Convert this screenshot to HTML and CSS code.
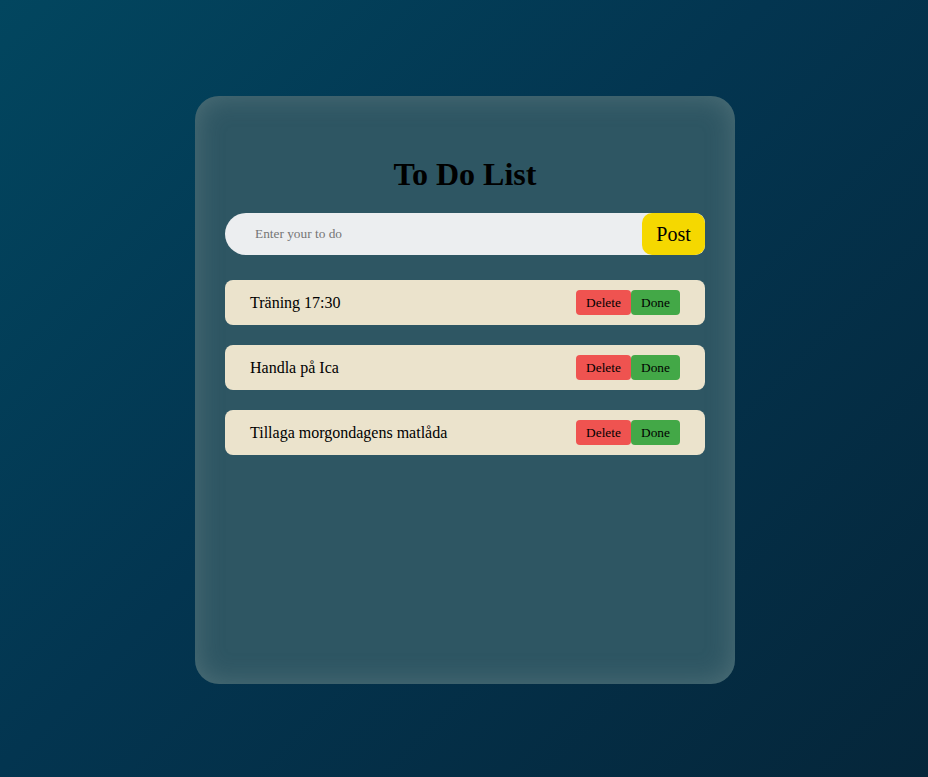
FILE: index.html
```html
<!DOCTYPE html>
<html>
<head>
<meta charset="utf-8">
<link rel="stylesheet" href="styles.css">
</head>
<body>
<div class="card">
  <h1 class="title">To Do List</h1>
  <div class="entry">
    <input class="entry-input" type="text" placeholder="Enter your to do">
    <button class="post-btn">Post</button>
  </div>
  <ul class="list">
    <li class="item"><span class="item-text">Träning 17:30</span><span class="actions"><button class="btn btn-delete">Delete</button><button class="btn btn-done">Done</button></span></li>
    <li class="item"><span class="item-text">Handla på Ica</span><span class="actions"><button class="btn btn-delete">Delete</button><button class="btn btn-done">Done</button></span></li>
    <li class="item"><span class="item-text">Tillaga morgondagens matlåda</span><span class="actions"><button class="btn btn-delete">Delete</button><button class="btn btn-done">Done</button></span></li>
  </ul>
</div>
</body>
</html>
```
FILE: styles.css
```css
html, body {
  margin: 0;
  height: 100%;
}
body {
  background: linear-gradient(135deg, #02465f 0%, #033550 45%, #05263a 100%);
  font-family: "Liberation Serif", "Times New Roman", serif;
  padding-top: 96px;
  box-sizing: border-box;
}
.card {
  width: 540px;
  height: 588px;
  margin-left: calc(50% - 269px);
  box-sizing: border-box;
  padding: 60px 30px 30px;
  border-radius: 24px;
  background: #2e5663;
  box-shadow: inset 0 0 28px rgba(140, 160, 160, 0.35);
}
.title {
  margin: 0 0 20px;
  text-align: center;
  font-size: 32px;
  font-weight: bold;
  color: #000;
  line-height: 37px;
}
.entry {
  display: flex;
  height: 42px;
  background: #eceef0;
  border-radius: 30px 14px 14px 30px;
}
.entry-input {
  flex: 1;
  border: none;
  outline: none;
  background: transparent;
  padding: 0 0 0 30px;
  font-family: "Liberation Serif", "Times New Roman", serif;
  font-size: 13.33px;
  color: #333;
}
.entry-input::placeholder {
  color: #757575;
}
.post-btn {
  width: 63px;
  border: none;
  border-radius: 10px;
  background: #f5d800;
  font-family: "Liberation Serif", "Times New Roman", serif;
  font-size: 20px;
  color: #000;
  padding: 0;
}
.list {
  list-style: none;
  margin: 25px 0 0;
  padding: 0;
  display: flex;
  flex-direction: column;
  gap: 20px;
}
.item {
  height: 45px;
  box-sizing: border-box;
  display: flex;
  align-items: center;
  justify-content: space-between;
  padding: 0 25px;
  background: #ebe3cc;
  border-radius: 8px;
  font-size: 16px;
  color: #000;
}
.actions {
  display: flex;
}
.btn {
  height: 25px;
  border: none;
  border-radius: 4px;
  font-family: "Liberation Serif", "Times New Roman", serif;
  font-size: 13.33px;
  color: #000;
  padding: 0 9px;
}
.btn-delete {
  background: #ef5350;
  width: 55px;
}
.btn-done {
  background: #43a847;
  width: 49px;
}
```
